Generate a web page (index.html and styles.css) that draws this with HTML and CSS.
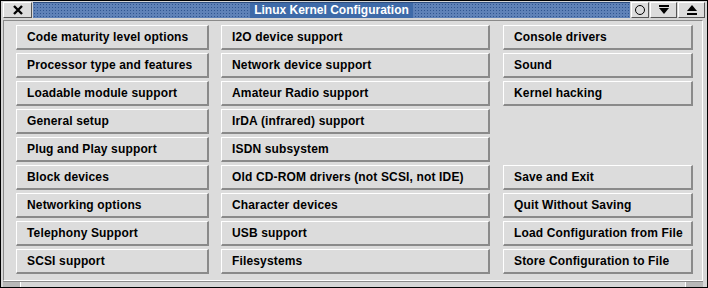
FILE: index.html
```html
<!DOCTYPE html>
<html lang="en">
<head>
  <meta charset="UTF-8" />
  <title>Linux Kernel Configuration</title>
  <link rel="stylesheet" href="styles.css">
</head>
<body>

<div class="window">
  <div class="titlebar">
    <div class="tb-btn close">
      <svg width="12" height="10" viewBox="0 0 12 10"><path d="M2 1 L10 9 M10 1 L2 9" stroke="#000" stroke-width="2.4"/></svg>
    </div>
    <div class="title-area">
      <span class="title">Linux Kernel Configuration</span>
    </div>
    <div class="tb-btn small">
      <svg width="12" height="12" viewBox="0 0 12 12"><circle cx="6" cy="6" r="4.5" fill="none" stroke="#000" stroke-width="1"/></svg>
    </div>
    <div class="tb-btn wide">
      <svg width="12" height="10" viewBox="0 0 12 10"><rect x="1" y="0" width="10" height="2" fill="#000"/><path d="M1 3 L11 3 L6 9 Z" fill="#000"/></svg>
    </div>
    <div class="tb-btn wide">
      <svg width="12" height="10" viewBox="0 0 12 10"><path d="M1 6 L11 6 L6 0 Z" fill="#000"/><rect x="1" y="8" width="10" height="2" fill="#000"/></svg>
    </div>
  </div>

  <div class="content">
    <div class="col col-a">
      <button>Code maturity level options</button>
      <button>Processor type and features</button>
      <button>Loadable module support</button>
      <button>General setup</button>
      <button>Plug and Play support</button>
      <button>Block devices</button>
      <button>Networking options</button>
      <button>Telephony Support</button>
      <button>SCSI support</button>
    </div>
    <div class="col col-b">
      <button>I2O device support</button>
      <button>Network device support</button>
      <button>Amateur Radio support</button>
      <button>IrDA (infrared) support</button>
      <button>ISDN subsystem</button>
      <button>Old CD-ROM drivers (not SCSI, not IDE)</button>
      <button>Character devices</button>
      <button>USB support</button>
      <button>Filesystems</button>
    </div>
    <div class="col col-c">
      <button>Console drivers</button>
      <button>Sound</button>
      <button>Kernel hacking</button>
      <div class="spacer"></div>
      <div class="spacer"></div>
      <button>Save and Exit</button>
      <button>Quit Without Saving</button>
      <button>Load Configuration from File</button>
      <button>Store Configuration to File</button>
    </div>
  </div>

  <div class="bottom-frame">
    <div class="handle left"></div>
    <div class="handle mid"></div>
    <div class="handle right"></div>
  </div>
</div>

</body>
</html>
```

FILE: styles.css
```css
* {
  box-sizing: border-box;
}
html, body {
  margin: 0;
  padding: 0;
  background: #d6d6d6;
  font-family: "Liberation Sans", Arial, sans-serif;
}
.window {
  width: 708px;
  height: 288px;
  border: 1px solid #000;
  background: #d6d6d6;
  display: flex;
  flex-direction: column;
}
.titlebar {
  height: 16px;
  margin: 1px 2px 2px 2px;
  display: flex;
  gap: 1px;
}
.tb-btn {
  height: 16px;
  background: #dcdcdc;
  border-top: 1px solid #fff;
  border-left: 1px solid #fff;
  border-right: 1px solid #555;
  border-bottom: 1px solid #555;
  display: flex;
  align-items: center;
  justify-content: center;
}
.tb-btn.close {
  width: 29px;
}
.tb-btn.small {
  width: 18px;
}
.tb-btn.wide {
  width: 27px;
}
.title-area {
  flex: 1;
  display: flex;
  justify-content: center;
  background-color: #5f82b8;
  background-image: radial-gradient(circle, #2f5590 0.8px, transparent 0.9px);
  background-size: 3px 3px;
  border-top: 1px solid #2b4b7d;
}
.title {
  background: #3e6aa8;
  color: #fff;
  font-weight: bold;
  font-size: 12px;
  line-height: 14px;
  padding: 0 4px;
}
.content {
  flex: 1;
  margin: 0 4px 0 2px;
  border-top: 1px solid #8a8a8a;
  border-left: 1px solid #8a8a8a;
  border-right: 1px solid #fff;
  border-bottom: 1px solid #fff;
  background: #dcdcdc;
  padding: 4px 0 0 12px;
  display: flex;
  gap: 12px;
}
.col {
  display: flex;
  flex-direction: column;
  gap: 3px;
}
.col-a {
  width: 193px;
}
.col-b {
  width: 269px;
  margin-right: 1px;
}
.col-c {
  width: 190px;
}
.spacer {
  height: 25px;
}
button {
  height: 25px;
  margin: 0;
  padding: 0 0 0 10px;
  text-align: left;
  font-family: "Liberation Sans", Arial, sans-serif;
  font-weight: bold;
  font-size: 12px;
  letter-spacing: 0.15px;
  color: #000;
  background: #dcdcdc;
  border-top: 1px solid #fff;
  border-left: 1px solid #fff;
  border-right: 2px solid #8a8a8a;
  border-bottom: 2px solid #8a8a8a;
  border-radius: 0;
}
.bottom-frame {
  height: 6px;
  margin: 0 4px 0 2px;
  display: flex;
  border-top: 1px solid #8a8a8a;
}
.handle.left {
  width: 18px;
  background: #b8b8b8;
  border-right: 1px solid #fff;
}
.handle.mid {
  flex: 1;
}
.handle.right {
  width: 18px;
  background: #b8b8b8;
  border-left: 1px solid #fff;
}
```
